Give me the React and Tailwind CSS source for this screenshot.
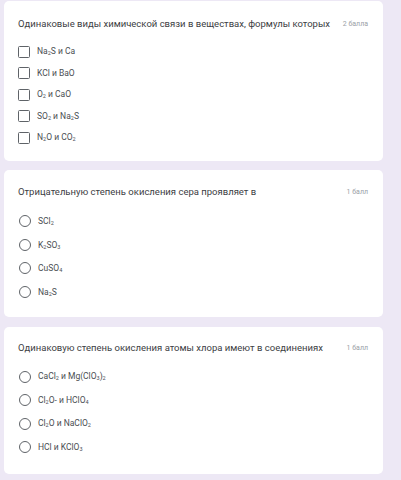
import React from "react";

const S = ({ children }) => (
  <sub className="text-[5.5px] align-baseline relative top-[1px]">{children}</sub>
);

const questions = [
  {
    title: "Одинаковые виды химической связи в веществах, формулы которых",
    points: "2 балла",
    type: "checkbox",
    wrap: "pt-[17px] pb-[12px] mb-[9px]",
    row: "h-[21.5px]",
    options: [
      <>Na<S>2</S>S и Ca</>,
      <>KCl и BaO</>,
      <>O<S>2</S> и CaO</>,
      <>SO<S>2</S> и Na<S>2</S>S</>,
      <>N<S>2</S>O и CO<S>2</S></>,
    ],
  },
  {
    title: "Отрицательную степень окисления сера проявляет в",
    points: "1 балл",
    type: "radio",
    wrap: "pt-[17px] pb-[13px] mb-[10px]",
    row: "h-[23.6px]",
    options: [
      <>SCl<S>2</S></>,
      <>K<S>2</S>SO<S>3</S></>,
      <>CuSO<S>4</S></>,
      <>Na<S>2</S>S</>,
    ],
  },
  {
    title: "Одинаковую степень окисления атомы хлора имеют в соединениях",
    points: "1 балл",
    type: "radio",
    wrap: "pt-[15px] pb-[15px]",
    row: "h-[23.6px]",
    options: [
      <>CaCl<S>2</S> и Mg(ClO<S>3</S>)<S>2</S></>,
      <>Cl<S>2</S>O- и HClO<S>4</S></>,
      <>Cl<S>2</S>O и NaClO<S>2</S></>,
      <>HCl и KClO<S>3</S></>,
    ],
  },
];

const Control = ({ type }) =>
  type === "checkbox" ? (
    <div className="w-[12px] h-[12px] ml-[14px] mr-[7px] border-[1.5px] border-[#5f6368] rounded-[1.5px] shrink-0" />
  ) : (
    <div className="w-[12px] h-[12px] ml-[15px] mr-[7px] border-[1.5px] border-[#5f6368] rounded-full shrink-0" />
  );

export default function App() {
  return (
    <div className="w-[401px] h-[480px] overflow-hidden bg-[#ede8f5] pt-[1px] pl-[4px] font-['Roboto',sans-serif]">
      {questions.map((q, i) => (
        <div
          key={i}
          className={`w-[379px] bg-white rounded-[5px] ${q.wrap}`}
        >
          <div className="flex items-center justify-between h-[12px] pl-[14px] pr-[15px] whitespace-nowrap">
            <span className="text-[9.5px] text-[#3c4043]">{q.title}</span>
            <span className="text-[7px] text-[#9aa0a6]">{q.points}</span>
          </div>
          <div className="mt-[11px]">
            {q.options.map((o, j) => (
              <div key={j} className={`flex items-center ${q.row}`}>
                <Control type={q.type} />
                <span className="text-[8.5px] text-[#4a4e52]">{o}</span>
              </div>
            ))}
          </div>
        </div>
      ))}
    </div>
  );
}
